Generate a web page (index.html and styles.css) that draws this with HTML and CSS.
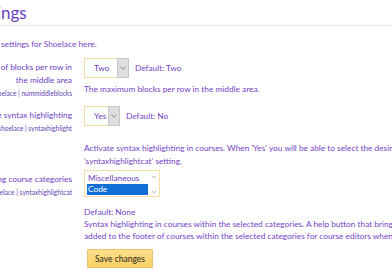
FILE: index.html
```html
<!DOCTYPE html>
<html>
<head>
<meta charset="utf-8">
<link rel="stylesheet" href="styles.css">
</head>
<body>
<h2 class="heading"><span class="pre"><span>Setti</span></span>ngs</h2>
<p class="intro"><span class="pre"><span>Configure the&nbsp;</span></span>settings for Shoelace here.</p>
<div class="settings">
  <div class="setting row-blocks">
    <div class="label">
      <span class="name">Number of blocks per row in</span>
      <span class="name">the middle area</span>
      <span class="key">theme_shoelace | nummiddleblocks</span>
    </div>
    <div class="control">
      <div class="field-row">
        <div class="select sel-two"><span class="value">Two</span><span class="arrow"><svg width="6" height="4" viewBox="0 0 6 4"><path d="M0.5 0.8 L3 3.2 L5.5 0.8" fill="none" stroke="#777" stroke-width="0.9"/></svg></span></div>
        <span class="default">Default: Two</span>
      </div>
      <div class="desc">The maximum blocks per row in the middle area.</div>
    </div>
  </div>
  <div class="setting row-syntax">
    <div class="label">
      <span class="name">Enable syntax highlighting</span>
      <span class="key">theme_shoelace | syntaxhighlight</span>
    </div>
    <div class="control">
      <div class="field-row">
        <div class="select sel-yes"><span class="value">Yes</span><span class="arrow"><svg width="6" height="4" viewBox="0 0 6 4"><path d="M0.5 0.8 L3 3.2 L5.5 0.8" fill="none" stroke="#777" stroke-width="0.9"/></svg></span></div>
        <span class="default">Default: No</span>
      </div>
      <div class="desc">Activate syntax highlighting in courses. When 'Yes' you will be able to select the desired categories in the<br>'syntaxhighlightcat' setting.</div>
    </div>
  </div>
  <div class="setting row-cats">
    <div class="label">
      <span class="name">Syntax highlighting course categories</span>
      <span class="key">theme_shoelace | syntaxhighlightcat</span>
    </div>
    <div class="control">
      <div class="multi">
        <div class="options">
          <div class="option">Miscellaneous</div>
          <div class="option selected">Code</div>
        </div>
        <div class="scroll">
          <svg width="6" height="4" viewBox="0 0 6 4"><path d="M0.8 3.2 L3 0.9 L5.2 3.2" fill="none" stroke="#a9a9a9" stroke-width="0.8"/></svg>
          <svg width="6" height="4" viewBox="0 0 6 4"><path d="M0.8 0.8 L3 3.1 L5.2 0.8" fill="none" stroke="#a9a9a9" stroke-width="0.8"/></svg>
        </div>
      </div>
      <div class="default-block">Default: None</div>
      <div class="desc">Syntax highlighting in courses within the selected categories. A help button that brings up the syntax highlighting instructions will be<br>added to the footer of courses within the selected categories for course editors when editing is on.</div>
    </div>
  </div>
  <div class="actions">
    <button class="save">Save changes</button>
  </div>
</div>
</body>
</html>
```

FILE: styles.css
```css
html, body {
  margin: 0;
  padding: 0;
  background: #ffffff;
  overflow: hidden;
}
body {
  width: 392px;
  height: 272px;
  font-family: Lato, "Liberation Sans", sans-serif;
  font-size: 8.3px;
  color: #7444c8;
}
.pre {
  display: inline-flex;
  width: 0;
  justify-content: flex-end;
  white-space: pre;
}
.heading {
  margin: 0;
  padding: 2px 0 0 1px;
  height: 23px;
  font-size: 17px;
  font-weight: normal;
  line-height: 22px;
  color: #6c3fc3;
  border-bottom: 1px solid #e6e6e6;
  white-space: nowrap;
}
.intro {
  margin: 0;
  padding: 12px 0 0 1px;
  line-height: 12px;
  white-space: nowrap;
}
.settings {
  padding-top: 8px;
}
.setting {
  display: grid;
  grid-template-columns: 72px 1fr;
  column-gap: 12px;
}
.label {
  display: flex;
  flex-direction: column;
  align-items: flex-end;
  text-align: right;
  padding-top: 3px;
  white-space: nowrap;
  color: #6d40c4;
}
.name {
  line-height: 13px;
}
.key {
  font-size: 6.6px;
  line-height: 12px;
  color: #5f3fb4;
}
.control {
  min-width: 0;
  white-space: nowrap;
}
.field-row {
  display: flex;
  align-items: center;
  gap: 6px;
}
.select {
  display: flex;
  height: 20px;
  box-sizing: border-box;
  border: 1px solid #f5dfa3;
  background: #fff;
}
.select .value {
  flex: 1;
  display: flex;
  align-items: center;
  padding-left: 9px;
  color: #6a3fc0;
}
.select .arrow {
  width: 10px;
  display: flex;
  align-items: center;
  justify-content: center;
  background: #dedede;
  border: 1px solid #c7c7c7;
  margin: -1px -1px -1px 0;
}
.sel-two { width: 45px; }
.sel-yes { width: 36px; }
.desc {
  line-height: 12px;
}
.row-blocks .desc { margin-top: 5px; }
.row-syntax { margin-top: 7px; }
.row-syntax .desc { margin-top: 16px; line-height: 13px; }
.row-cats { margin-top: 2px; }
.multi {
  display: flex;
  width: 76px;
  height: 27px;
  box-sizing: border-box;
  border: 1px solid #f5dfa3;
  background: #fff;
  padding: 2px 0 1px 2px;
}
.options {
  flex: 1;
}
.option {
  line-height: 11px;
  padding-left: 1px;
  color: #6a3fc0;
}
.option.selected {
  background: #0f6fd4;
  color: #fff;
}
.scroll {
  width: 11px;
  display: flex;
  flex-direction: column;
  justify-content: space-between;
  align-items: center;
  padding: 2px 0 1px;
}
.default-block {
  margin-top: 9px;
  line-height: 12px;
}
.row-cats .desc { margin-top: 0; }
.actions {
  padding: 7px 0 0 87px;
}
.save {
  font-family: Lato, "Liberation Sans", sans-serif;
  font-size: 8.5px;
  color: #222;
  height: 19px;
  width: 66px;
  padding: 0;
  border: 1px solid #e9c46a;
  border-radius: 1px;
  background: linear-gradient(#fde08a, #f8cf63);
}
```
